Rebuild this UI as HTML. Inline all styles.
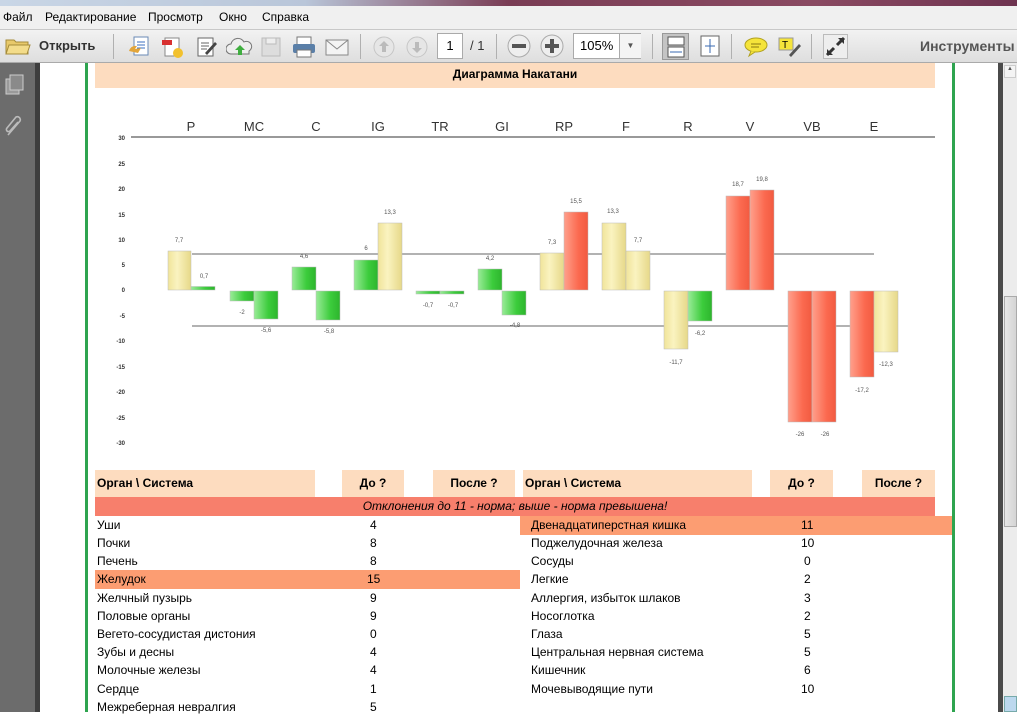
<!DOCTYPE html>
<html><head><meta charset="utf-8">
<style>
*{margin:0;padding:0;box-sizing:border-box}
body{width:1017px;height:712px;overflow:hidden;position:relative;font-family:"Liberation Sans",Arial,sans-serif;background:#fff;color:#000}
.abs{position:absolute}
#title{left:0;top:0;width:1017px;height:6px;background:linear-gradient(90deg,#c9d6e6 0,#b9c6d9 30%,#7a3d55 50%,#8a4a62 80%,#6e3350 100%)}
#menu{left:0;top:6px;width:1017px;height:24px;background:#f0f0f0;border-bottom:1px solid #c8c8c8;font-size:12px}
#menu span{position:absolute;top:4px}
#tb{left:0;top:30px;width:1017px;height:33px;background:linear-gradient(#f2f2f2,#dedede);border-bottom:1px solid #aaa}
.sep{position:absolute;top:4px;width:1px;height:25px;background:#b0b0b0}
.ic{position:absolute;top:5px}
#side{left:0;top:63px;width:35px;height:649px;background:#6c6c6c}
#side2{left:35px;top:63px;width:5px;height:649px;background:#3e3e3e}
.gl{position:absolute;top:63px;width:3px;height:649px;background:#2ea44f}
#sb{left:998px;top:63px;width:5px;height:649px;background:#4a4a4a}
#scroll{left:1003px;top:63px;width:14px;height:649px;background:#ececec}
.hdr{position:absolute;top:470px;height:27px;background:#fddcbf;font-weight:bold;font-size:12px;line-height:27px}
.row{position:absolute;font-size:12px;height:18px;line-height:18px}
</style></head><body>
<div class="abs" id="title"></div>
<div class="abs" id="menu">
<span style="left:3px">Файл</span><span style="left:45px">Редактирование</span><span style="left:148px">Просмотр</span><span style="left:219px">Окно</span><span style="left:262px">Справка</span>
</div>
<div class="abs" id="tb">
<svg class="ic" style="left:5px;top:6px" width="26" height="20"><path d="M1 4h8l2 2h12v12H1z" fill="#e8c96a" stroke="#a58b3a"/><path d="M1 18l3-9h21l-3 9z" fill="#f3dc8a" stroke="#a58b3a"/></svg>
<span style="position:absolute;left:39px;top:8px;font-weight:bold;font-size:13px;color:#333">Открыть</span>
<div class="sep" style="left:113px"></div>
<svg class="ic" style="left:127px" width="24" height="24"><rect x="7" y="2" width="14" height="18" fill="#fff" stroke="#6a8ab5"/><path d="M10 7h8M10 10h8M10 13h8" stroke="#3b6fc0"/><path d="M2 16q2-6 8-5l-2 3 6-1-3 5" fill="#e2a53a"/></svg>
<svg class="ic" style="left:160px" width="24" height="24"><rect x="5" y="3" width="14" height="18" fill="#fff" stroke="#888"/><rect x="2" y="5" width="10" height="5" fill="#d83030"/><circle cx="18" cy="18" r="5" fill="#f2c12e"/></svg>
<svg class="ic" style="left:195px" width="24" height="24"><rect x="3" y="3" width="15" height="18" fill="#fff" stroke="#666"/><path d="M6 8h8M6 11h8M6 14h6" stroke="#666"/><path d="M10 18l10-11 2 2-10 11z" fill="#444"/></svg>
<svg class="ic" style="left:226px" width="28" height="24"><path d="M5 19a5 5 0 010-10 7 7 0 0113-2 5 5 0 015 9v3z" fill="#eee" stroke="#777"/><path d="M14 10l-5 5h3v5h4v-5h3z" fill="#3fae3f"/></svg>
<svg class="ic" style="left:260px" width="22" height="24"><rect x="2" y="3" width="18" height="18" fill="#ddd" stroke="#bbb"/><rect x="6" y="3" width="10" height="6" fill="#eee" stroke="#bbb"/></svg>
<svg class="ic" style="left:291px" width="26" height="24"><rect x="6" y="2" width="14" height="8" fill="#fff" stroke="#777"/><rect x="2" y="9" width="22" height="9" rx="2" fill="#5a7fa8"/><rect x="6" y="15" width="14" height="7" fill="#fff" stroke="#777"/></svg>
<svg class="ic" style="left:324px" width="26" height="24"><rect x="2" y="5" width="22" height="15" fill="#f4f4f4" stroke="#888"/><path d="M2 5l11 9 11-9" fill="none" stroke="#888"/></svg>
<div class="sep" style="left:360px"></div>
<svg class="ic" style="left:372px;top:5px" width="24" height="24"><circle cx="12" cy="12" r="10" fill="#e6e6e6" stroke="#c6c6c6"/><path d="M12 6l-5 5h3v6h4v-6h3z" fill="#bbb"/></svg>
<svg class="ic" style="left:405px;top:5px" width="24" height="24"><circle cx="12" cy="12" r="10" fill="#e6e6e6" stroke="#c6c6c6"/><path d="M12 18l-5-5h3V7h4v6h3z" fill="#bbb"/></svg>
<div style="position:absolute;left:437px;top:3px;width:26px;height:26px;background:#fff;border:1px solid #aaa;font-size:13px;line-height:24px;text-align:center">1</div>
<span style="position:absolute;left:470px;top:8px;font-size:13px;color:#333">/ 1</span>
<div class="sep" style="left:496px"></div>
<svg class="ic" style="left:507px;top:4px" width="24" height="24"><circle cx="12" cy="12" r="11" fill="#eee" stroke="#aaa"/><rect x="5" y="10" width="14" height="4" fill="#555"/></svg>
<svg class="ic" style="left:540px;top:4px" width="24" height="24"><circle cx="12" cy="12" r="11" fill="#eee" stroke="#aaa"/><rect x="5" y="10" width="14" height="4" fill="#555"/><rect x="10" y="5" width="4" height="14" fill="#555"/></svg>
<div style="position:absolute;left:573px;top:3px;width:68px;height:26px;background:#fff;border:1px solid #aaa;font-size:13px;line-height:24px;padding-left:6px">105%<span style="position:absolute;left:45px;top:0;width:22px;height:24px;border-left:1px solid #aaa;background:#f4f4f4;font-size:8px;text-align:center;color:#555">▼</span></div>
<div class="sep" style="left:652px"></div>
<div style="position:absolute;left:662px;top:3px;width:27px;height:27px;background:#c4c4c4;border:1px solid #999"></div>
<svg class="ic" style="left:664px;top:5px" width="24" height="24"><rect x="4" y="2" width="16" height="8" fill="#fff" stroke="#555"/><rect x="4" y="12" width="16" height="10" fill="#fff" stroke="#555"/><path d="M6 17h12" stroke="#3a6ab0"/></svg>
<svg class="ic" style="left:698px;top:4px" width="24" height="24"><rect x="3" y="2" width="18" height="20" fill="#fff" stroke="#666"/><path d="M12 5v14M7 12h10" stroke="#3a6ab0"/></svg>
<div class="sep" style="left:731px"></div>
<svg class="ic" style="left:743px;top:6px" width="26" height="22"><ellipse cx="13" cy="9" rx="11" ry="7" fill="#f5e43a" stroke="#b0a020"/><path d="M8 15l-2 5 6-4" fill="#f5e43a" stroke="#b0a020"/><path d="M8 8h10M8 11h8" stroke="#8a7a10"/></svg>
<svg class="ic" style="left:777px;top:5px" width="26" height="24"><rect x="2" y="3" width="14" height="12" fill="#f5e43a" stroke="#999"/><text x="5" y="13" font-size="10" font-family="Liberation Sans">T</text><path d="M12 20l10-11 2 2-10 11z" fill="#555"/></svg>
<div class="sep" style="left:811px"></div>
<svg class="ic" style="left:823px;top:4px" width="25" height="25"><rect x="0.5" y="0.5" width="24" height="24" fill="#eee" stroke="#bbb"/><path d="M4 21l7-7M21 4l-7 7" stroke="#333" stroke-width="3"/><path d="M4 21v-6l6 6zM21 4v6l-6-6z" fill="#333"/></svg>
<span style="position:absolute;left:920px;top:8px;font-weight:bold;font-size:14px;color:#555">Инструменты</span>
</div>
<div class="abs" id="side"></div>
<div class="abs" id="side2"></div>
<svg class="abs" style="left:4px;top:74px" width="22" height="24"><rect x="2" y="5" width="13" height="15" fill="#9a9a9a" stroke="#ccc"/><rect x="6" y="1" width="13" height="15" fill="#8a8a8a" stroke="#ccc"/></svg>
<svg class="abs" style="left:3px;top:113px" width="24" height="26"><path d="M5 22l12-14a3 3 0 00-4-4L4 15a2 2 0 003 3l8-9" fill="none" stroke="#bbb" stroke-width="1.6"/></svg>
<div class="gl" style="left:85px"></div>
<div class="gl" style="left:952px"></div>
<div class="abs" id="sb"></div>
<div class="abs" id="scroll">
<div style="position:absolute;left:1px;top:2px;width:12px;height:13px;background:#f4f4f4;border:1px solid #ccc;font-size:6px;text-align:center;color:#555">▲</div>
<div style="position:absolute;left:1px;top:233px;width:13px;height:231px;background:linear-gradient(90deg,#e6e6e6,#d4d4d4);border:1px solid #aaa"></div>
<div style="position:absolute;left:1px;top:633px;width:13px;height:16px;background:#bcd8ee;border:1px solid #7aa"></div>
</div>
<div class="abs" style="left:95px;top:63px;width:840px;height:25px;background:#fddcbf;font-weight:bold;font-size:12px;text-align:center;line-height:22px">Диаграмма Накатани</div>

<svg class="abs" style="left:88px;top:100px" width="864" height="360" viewBox="88 100 864 360">
<defs>
<linearGradient id="y" x1="0" x2="1"><stop offset="0" stop-color="#f0e49a"/><stop offset=".4" stop-color="#faf3c0"/><stop offset="1" stop-color="#e6d888"/></linearGradient>
<linearGradient id="g" x1="0" x2="1"><stop offset="0" stop-color="#9aeb98"/><stop offset=".6" stop-color="#3ccc3c"/><stop offset="1" stop-color="#2db52d"/></linearGradient>
<linearGradient id="r" x1="0" x2="1"><stop offset="0" stop-color="#ffa08c"/><stop offset=".6" stop-color="#fb6a50"/><stop offset="1" stop-color="#f25a40"/></linearGradient>
</defs>
<g font-family="Liberation Sans" font-size="6" font-weight="bold" fill="#333" text-anchor="end">
<text x="125" y="140">30</text><text x="125" y="166">25</text><text x="125" y="191">20</text><text x="125" y="217">15</text><text x="125" y="242">10</text><text x="125" y="267">5</text><text x="125" y="292">0</text><text x="125" y="318">-5</text><text x="125" y="343">-10</text><text x="125" y="369">-15</text><text x="125" y="394">-20</text><text x="125" y="420">-25</text><text x="125" y="445">-30</text>
</g>
<line x1="131" y1="137" x2="935" y2="137" stroke="#999" stroke-width="2"/>
<line x1="192" y1="254" x2="874" y2="254" stroke="#666"/>
<line x1="192" y1="326" x2="874" y2="326" stroke="#666"/>
<g font-family="Liberation Sans" font-size="13" fill="#333" text-anchor="middle">
<text x="191" y="131">P</text><text x="254" y="131">MC</text><text x="316" y="131">C</text><text x="378" y="131">IG</text><text x="440" y="131">TR</text><text x="502" y="131">GI</text><text x="564" y="131">RP</text><text x="626" y="131">F</text><text x="688" y="131">R</text><text x="750" y="131">V</text><text x="812" y="131">VB</text><text x="874" y="131">E</text>
</g>
<g stroke="#bbb" stroke-width=".5">
<rect x="168" y="251" width="23" height="39" fill="url(#y)"/><rect x="191" y="286.5" width="24" height="3.5" fill="url(#g)"/>
<rect x="230" y="291" width="24" height="10" fill="url(#g)"/><rect x="254" y="291" width="24" height="28" fill="url(#g)"/>
<rect x="292" y="267" width="24" height="23" fill="url(#g)"/><rect x="316" y="291" width="24" height="29" fill="url(#g)"/>
<rect x="354" y="260" width="24" height="30" fill="url(#g)"/><rect x="378" y="223" width="24" height="67" fill="url(#y)"/>
<rect x="416" y="291" width="24" height="3" fill="url(#g)"/><rect x="440" y="291" width="24" height="3" fill="url(#g)"/>
<rect x="478" y="269" width="24" height="21" fill="url(#g)"/><rect x="502" y="291" width="24" height="24" fill="url(#g)"/>
<rect x="540" y="253" width="24" height="37" fill="url(#y)"/><rect x="564" y="212" width="24" height="78" fill="url(#r)"/>
<rect x="602" y="223" width="24" height="67" fill="url(#y)"/><rect x="626" y="251" width="24" height="39" fill="url(#y)"/>
<rect x="664" y="291" width="24" height="58" fill="url(#y)"/><rect x="688" y="291" width="24" height="30" fill="url(#g)"/>
<rect x="726" y="196" width="24" height="94" fill="url(#r)"/><rect x="750" y="190" width="24" height="100" fill="url(#r)"/>
<rect x="788" y="291" width="24" height="131" fill="url(#r)"/><rect x="812" y="291" width="24" height="131" fill="url(#r)"/>
<rect x="850" y="291" width="24" height="86" fill="url(#r)"/><rect x="874" y="291" width="24" height="61" fill="url(#y)"/>
</g>
<g font-family="Liberation Sans" font-size="6" fill="#555" text-anchor="middle">
<text x="179" y="242">7,7</text><text x="204" y="278">0,7</text>
<text x="242" y="314">-2</text><text x="266" y="332">-5,6</text>
<text x="304" y="258">4,6</text><text x="329" y="333">-5,8</text>
<text x="366" y="250">6</text><text x="390" y="214">13,3</text>
<text x="428" y="307">-0,7</text><text x="453" y="307">-0,7</text>
<text x="490" y="260">4,2</text><text x="515" y="327">-4,8</text>
<text x="552" y="244">7,3</text><text x="576" y="203">15,5</text>
<text x="613" y="213">13,3</text><text x="638" y="242">7,7</text>
<text x="676" y="364">-11,7</text><text x="700" y="335">-6,2</text>
<text x="738" y="186">18,7</text><text x="762" y="181">19,8</text>
<text x="800" y="436">-26</text><text x="825" y="436">-26</text>
<text x="862" y="392">-17,2</text><text x="886" y="366">-12,3</text>
</g>
</svg>

<div class="hdr" style="left:95px;width:220px;padding-left:2px">Орган \ Система</div>
<div class="hdr" style="left:342px;width:62px;text-align:center">До ?</div>
<div class="hdr" style="left:433px;width:82px;text-align:center">После ?</div>
<div class="hdr" style="left:523px;width:229px;padding-left:2px">Орган \ Система</div>
<div class="hdr" style="left:770px;width:63px;text-align:center">До ?</div>
<div class="hdr" style="left:862px;width:73px;text-align:center">После ?</div>
<div class="abs" style="left:95px;top:497px;width:840px;height:19px;background:#f77f6c;font-style:italic;font-size:12px;line-height:19px;text-align:center">Отклонения до 11 - норма; выше - норма превышена!</div>
<div class="abs" style="left:95px;top:570px;width:425px;height:19px;background:#fc9d72"></div>
<div class="abs" style="left:520px;top:516px;width:432px;height:19px;background:#fc9d72"></div>

<div class="row" style="left:97px;top:516px">Уши</div><div class="row" style="left:370px;top:516px">4</div>
<div class="row" style="left:97px;top:534px">Почки</div><div class="row" style="left:370px;top:534px">8</div>
<div class="row" style="left:97px;top:552px">Печень</div><div class="row" style="left:370px;top:552px">8</div>
<div class="row" style="left:97px;top:570px">Желудок</div><div class="row" style="left:367px;top:570px">15</div>
<div class="row" style="left:97px;top:589px">Желчный пузырь</div><div class="row" style="left:370px;top:589px">9</div>
<div class="row" style="left:97px;top:607px">Половые органы</div><div class="row" style="left:370px;top:607px">9</div>
<div class="row" style="left:97px;top:625px">Вегето-сосудистая дистония</div><div class="row" style="left:370px;top:625px">0</div>
<div class="row" style="left:97px;top:643px">Зубы и десны</div><div class="row" style="left:370px;top:643px">4</div>
<div class="row" style="left:97px;top:661px">Молочные железы</div><div class="row" style="left:370px;top:661px">4</div>
<div class="row" style="left:97px;top:680px">Сердце</div><div class="row" style="left:370px;top:680px">1</div>
<div class="row" style="left:97px;top:698px">Межреберная невралгия</div><div class="row" style="left:370px;top:698px">5</div>

<div class="row" style="left:531px;top:516px">Двенадцатиперстная кишка</div><div class="row" style="left:801px;top:516px">11</div>
<div class="row" style="left:531px;top:534px">Поджелудочная железа</div><div class="row" style="left:801px;top:534px">10</div>
<div class="row" style="left:531px;top:552px">Сосуды</div><div class="row" style="left:804px;top:552px">0</div>
<div class="row" style="left:531px;top:570px">Легкие</div><div class="row" style="left:804px;top:570px">2</div>
<div class="row" style="left:531px;top:589px">Аллергия, избыток шлаков</div><div class="row" style="left:804px;top:589px">3</div>
<div class="row" style="left:531px;top:607px">Носоглотка</div><div class="row" style="left:804px;top:607px">2</div>
<div class="row" style="left:531px;top:625px">Глаза</div><div class="row" style="left:804px;top:625px">5</div>
<div class="row" style="left:531px;top:643px">Центральная нервная система</div><div class="row" style="left:804px;top:643px">5</div>
<div class="row" style="left:531px;top:661px">Кишечник</div><div class="row" style="left:804px;top:661px">6</div>
<div class="row" style="left:531px;top:680px">Мочевыводящие пути</div><div class="row" style="left:801px;top:680px">10</div>
</body></html>
